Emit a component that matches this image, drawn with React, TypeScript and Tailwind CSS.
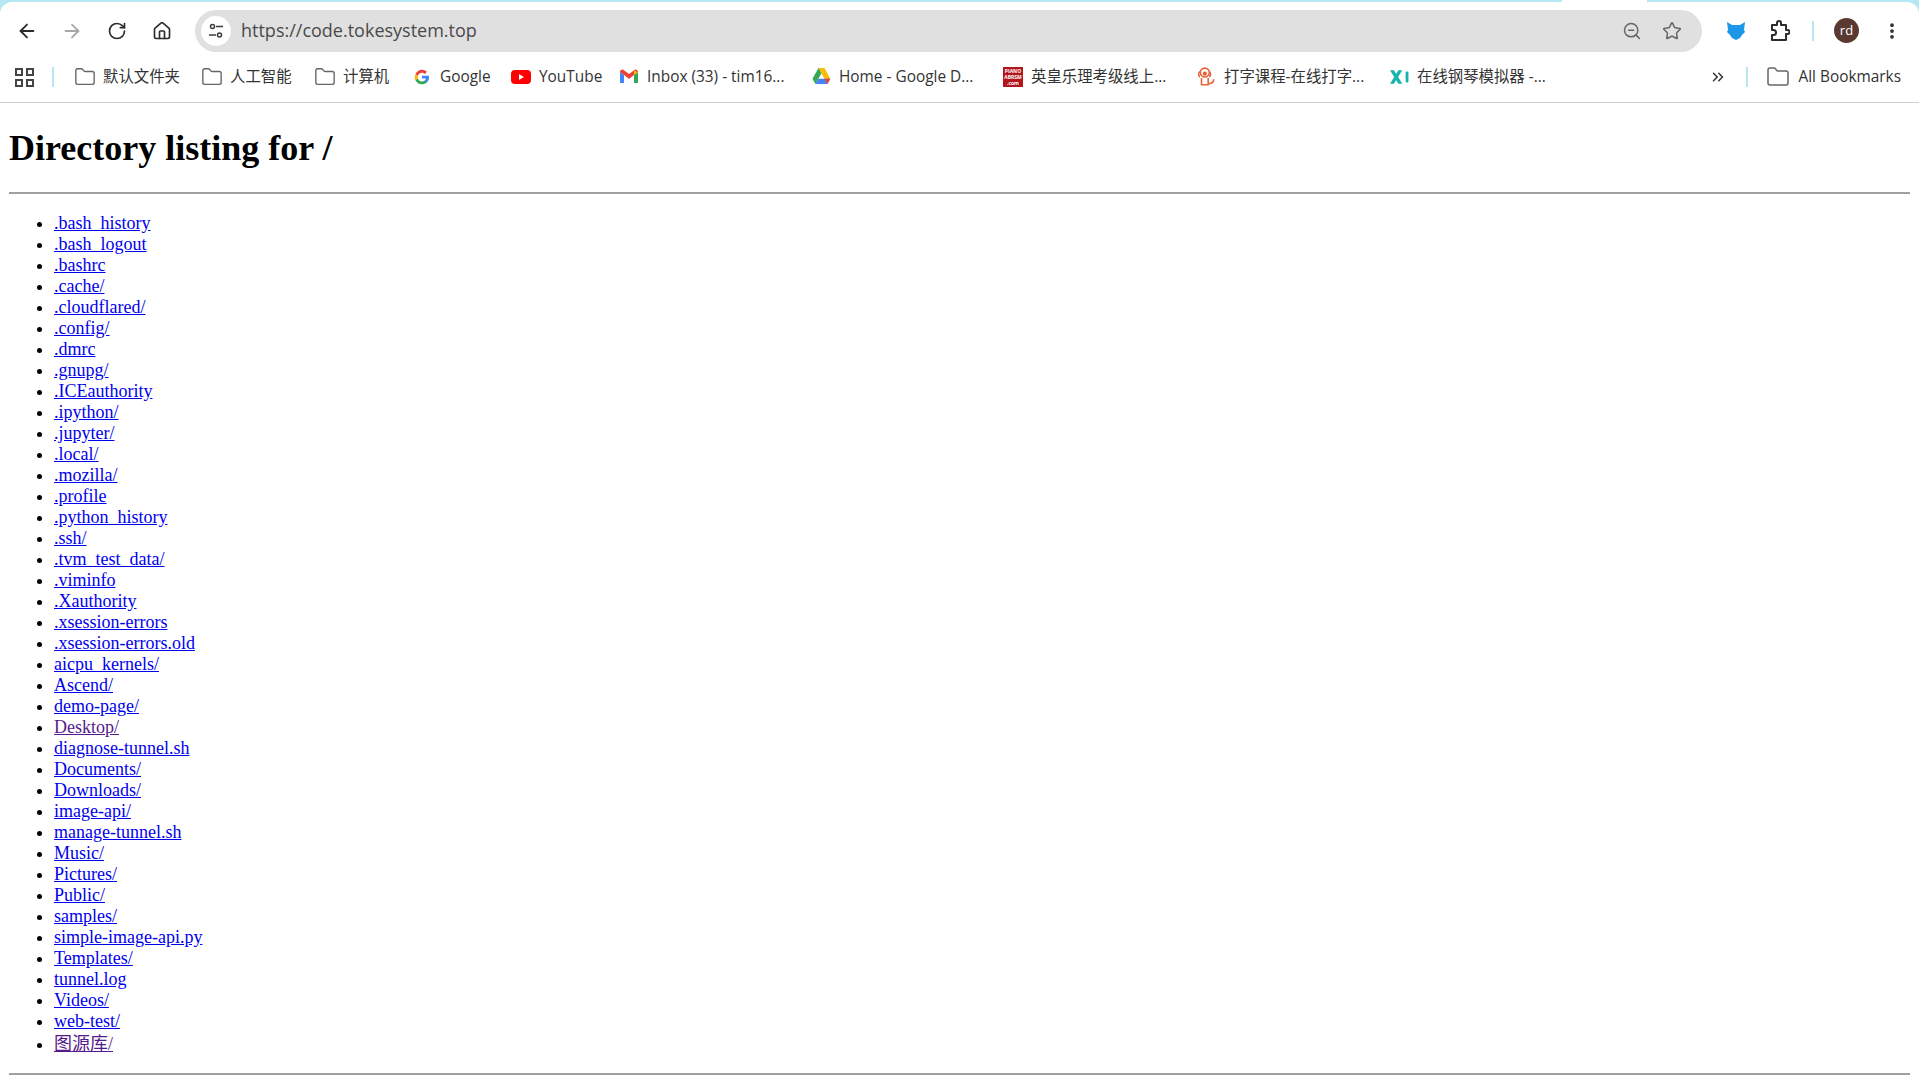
import React from 'react';
import { ArrowLeft, ArrowRight, RotateCw, Home, Folder, ZoomOut, Star, EllipsisVertical, ChevronsRight } from 'lucide-react';

const SANS = 'font-["Open_Sans","Noto_Sans_CJK_SC",sans-serif]';

const ENTRIES = [
  '.bash_history', '.bash_logout', '.bashrc', '.cache/', '.cloudflared/', '.config/', '.dmrc', '.gnupg/',
  '.ICEauthority', '.ipython/', '.jupyter/', '.local/', '.mozilla/', '.profile', '.python_history', '.ssh/',
  '.tvm_test_data/', '.viminfo', '.Xauthority', '.xsession-errors', '.xsession-errors.old', 'aicpu_kernels/',
  'Ascend/', 'demo-page/', 'Desktop/', 'diagnose-tunnel.sh', 'Documents/', 'Downloads/', 'image-api/',
  'manage-tunnel.sh', 'Music/', 'Pictures/', 'Public/', 'samples/', 'simple-image-api.py', 'Templates/',
  'tunnel.log', 'Videos/', 'web-test/', '图源库/',
];
const VISITED = new Set(['Desktop/', '图源库/']);

function GoogleIcon() {
  return (
    <svg width="16" height="16" viewBox="0 0 48 48">
      <path fill="#4285F4" d="M45 24.5c0-1.6-.1-3.1-.4-4.500H24v8.500h11.800c-.5 2.700-2 5-4.400 6.600v5.500h7.100C42.600 36.800 45 31.200 45 24.500z" />
      <path fill="#34A853" d="M24 46c5.900 0 10.900-2 14.500-5.400l-7.100-5.500c-2 1.300-4.500 2.100-7.400 2.100-5.700 0-10.500-3.800-12.200-9H4.500v5.700C8.100 41 15.500 46 24 46z" />
      <path fill="#FBBC05" d="M11.800 28.700c-.9-2.700-.9-5.600 0-8.300v-5.700H4.500a22 22 0 0 0 0 19.700z" />
      <path fill="#EA4335" d="M24 11.400c3.200 0 6.100 1.100 8.400 3.300l6.300-6.300C34.900 4.800 29.900 2 24 2 15.500 2 8.100 7 4.500 14.700l7.300 5.700c1.700-5.200 6.500-9 12.200-9z" />
    </svg>
  );
}

function YouTubeIcon() {
  return (
    <svg width="20" height="16" viewBox="0 0 20 16">
      <rect x="0" y="1" width="20" height="14" rx="4" fill="#F00" />
      <path d="M8 5l5 3-5 3z" fill="#fff" />
    </svg>
  );
}

function GmailIcon() {
  return (
    <svg width="18" height="16" viewBox="0 0 18 16">
      <path d="M0 3v11h4V6z" fill="#4285F4" />
      <path d="M14 6v8h4V3z" fill="#34A853" />
      <path d="M0 3c0-2 2-3 3.500-2L9 5l5.500-4C16 0 18 1 18 3l-4 3-5 4-5-4z" fill="#EA4335" />
      <path d="M14 1.400 18 3l-4 3z" fill="#FBBC05" />
    </svg>
  );
}

function DriveIcon() {
  return (
    <svg width="19" height="17" viewBox="0 0 17 16">
      <path d="M5.700 0h5.600l5.500 10h-5.600z" fill="#FBBC05" />
      <path d="M5.700 0 0 10l2.800 5 5.600-10z" fill="#34A853" />
      <path d="M5.600 10h11.200l-2.800 5H2.800z" fill="#4285F4" />
      <path d="M11.200 10h5.600l-2.800 5z" fill="#EA4335" />
    </svg>
  );
}

function AbrsmIcon() {
  return (
    <div className="flex h-[20px] w-[20px] flex-col items-center justify-center bg-[#b3151c] text-[5px] leading-[6px] font-bold text-white">
      <span>PIANO</span>
      <span>ABRSM</span>
      <span>.com</span>
    </div>
  );
}

function DogIcon() {
  return (
    <svg width="19" height="20" viewBox="0 0 17 18" fill="none" stroke="#e8623a" strokeWidth="1.400">
      <circle cx="7" cy="5" r="4" />
      <path d="M3 4C1 5 1 8 2.500 9M11 4c1.500 1 1.500 4 0 5M4 10v6h6v-6M10 15c3 0 5-1 5-4" />
      <circle cx="7" cy="6" r="1.200" fill="#e8623a" />
    </svg>
  );
}

function XiIcon() {
  return (
    <svg width="19" height="14" viewBox="0 0 17 12" fill="#17b3ac">
      <path d="M0 0h3.500L11 12H7.500zM7.500 0H11L3.500 12H0z" />
      <rect x="14" y="1" width="2.500" height="10" rx="1" />
    </svg>
  );
}

function FoxIcon() {
  return (
    <svg width="18" height="20" viewBox="0 0 18 20" fill="#1c97e8">
      <path d="M0 1l5 3h8l5-3-1 8 1 2-3 3-2 3-4 2-4-2-2-3-3-3 1-2z" />
    </svg>
  );
}

function ExtensionIcon() {
  return (
    <svg width="20" height="22" viewBox="0 0 20 22" fill="none" stroke="#2c2c2c" strokeWidth="2" strokeLinejoin="round">
      <path d="M2 5h5V3a2 2 0 0 1 4 0v2h5v5h1.500a2 2 0 0 1 0 4H16v6H2v-5h1.500a2.500 2.500 0 0 0 0-5H2z" />
    </svg>
  );
}

function TuneIcon() {
  return (
    <svg width="16" height="16" viewBox="0 0 16 16" fill="none" stroke="#3c3c3c" strokeWidth="1.500">
      <circle cx="4.500" cy="3.500" r="2" />
      <path d="M8 3.500h7M1 12h7" />
      <circle cx="11.500" cy="12" r="2" />
    </svg>
  );
}

function Bookmark({ icon, label, className }: { icon: React.ReactNode; label: string; className: string }) {
  return (
    <div className={`flex shrink-0 items-center gap-[7px] ${className}`}>
      <span className="flex w-[22px] shrink-0 justify-center">{icon}</span>
      <span className="text-[15.400px] whitespace-nowrap text-[#333]">{label}</span>
    </div>
  );
}

function FolderIcon() {
  return <Folder size={24} strokeWidth={1.500} className="text-[#666]" />;
}

function BrowserChrome() {
  return (
    <header className={`${SANS} bg-[#b5e8f3]`}>
      <div className="flex h-[2px]">
        <div className="w-[1562px] bg-[#b5e8f3]" />
        <div className="w-[85px] bg-white" />
        <div className="grow bg-[#b5e8f3]" />
      </div>
      <div className="rounded-t-[12px] border-b border-[#d0d0d0] bg-white">
        <div className="flex h-[50px] items-center pt-[7px]">
          <div className="flex w-[195px] items-center pl-[16px] text-[#333]">
            <ArrowLeft size={22} strokeWidth={2} className="text-[#2c2c2c]" />
            <ArrowRight size={22} strokeWidth={2} className="ml-[23px] text-[#a8a8a8]" />
            <RotateCw size={20} strokeWidth={2} className="ml-[24px] text-[#2c2c2c]" />
            <Home size={20} strokeWidth={2} className="ml-[25px] text-[#2c2c2c]" />
          </div>
          <div className="flex h-[42px] w-[1507px] items-center rounded-full bg-[#e0e0e0] pr-[20px] pl-[6px]">
            <span className="flex h-[30px] w-[30px] items-center justify-center rounded-full bg-white">
              <TuneIcon />
            </span>
            <span className="ml-[10px] grow text-[18px] text-[#4a4a4a]">https://code.tokesystem.top</span>
            <ZoomOut size={20} strokeWidth={1.800} className="text-[#666]" />
            <Star size={20} strokeWidth={1.800} className="ml-[20px] text-[#666]" />
          </div>
          <div className="flex grow items-center pl-[25px]">
            <FoxIcon />
            <span className="ml-[25px]"><ExtensionIcon /></span>
            <span className="ml-[22px] h-[20px] w-[2px] bg-[#b5e8f3]" />
            <span className="ml-[20px] flex h-[25px] w-[25px] items-center justify-center rounded-full bg-[#5a3a30] text-[13px] text-white">rd</span>
            <EllipsisVertical size={20} strokeWidth={2.500} className="ml-[23px] text-[#2c2c2c]" />
          </div>
        </div>
        <div className="flex h-[50px] items-center">
          <div className="ml-[15px] grid h-[19px] w-[19px] grid-cols-2 gap-[3px]">
            <span className="border-2 border-[#444]" />
            <span className="border-2 border-[#444]" />
            <span className="border-2 border-[#444]" />
            <span className="border-2 border-[#444]" />
          </div>
          <span className="ml-[18px] h-[20px] w-[2px] bg-[#b5e8f3]" />
          <div className="ml-[20px] flex grow items-center">
            <Bookmark icon={<FolderIcon />} label="默认文件夹" className="w-[127px]" />
            <Bookmark icon={<FolderIcon />} label="人工智能" className="w-[113px]" />
            <Bookmark icon={<FolderIcon />} label="计算机" className="w-[97px]" />
            <Bookmark icon={<GoogleIcon />} label="Google" className="w-[99px]" />
            <Bookmark icon={<YouTubeIcon />} label="YouTube" className="w-[108px]" />
            <Bookmark icon={<GmailIcon />} label="Inbox (33) - tim16..." className="w-[192px]" />
            <Bookmark icon={<DriveIcon />} label="Home - Google D..." className="w-[192px]" />
            <Bookmark icon={<AbrsmIcon />} label="英皇乐理考级线上..." className="w-[193px]" />
            <Bookmark icon={<DogIcon />} label="打字课程-在线打字..." className="w-[193px]" />
            <Bookmark icon={<XiIcon />} label="在线钢琴模拟器 -..." className="w-[160px]" />
          </div>
          <ChevronsRight size={18} strokeWidth={2} className="ml-[1px] text-[#333]" />
          <span className="ml-[19px] h-[20px] w-[2px] bg-[#b5e8f3]" />
          <div className="mr-[18px] ml-[18px] flex items-center gap-[8px]">
            <FolderIcon />
            <span className="text-[15.400px] text-[#333]">All Bookmarks</span>
          </div>
        </div>
      </div>
    </header>
  );
}

function DirectoryListing() {
  return (
    <main className='px-[9px] font-["Liberation_Serif","Noto_Sans_CJK_SC",serif] text-[18px] text-black'>
      <h1 className="pt-[25px] text-[36px] leading-[40px] font-bold">Directory listing for /</h1>
      <hr className="mt-[24px] border-t-2 border-[#a0a0a0]" />
      <ul className="mt-[19px] list-disc pl-[45px]">
        {ENTRIES.map((entry) => (
          <li key={entry} className="leading-[21px] last:leading-[25px]">
            <a
              href="#"
              className={`underline ${VISITED.has(entry) ? 'text-[#551a8b]' : 'text-[#0000ee]'}`}
            >
              {entry}
            </a>
          </li>
        ))}
      </ul>
      <hr className="mt-[16px] border-t-2 border-[#a0a0a0]" />
    </main>
  );
}

export default function App() {
  return (
    <div className="h-[1091px] overflow-hidden bg-white">
      <BrowserChrome />
      <DirectoryListing />
    </div>
  );
}
